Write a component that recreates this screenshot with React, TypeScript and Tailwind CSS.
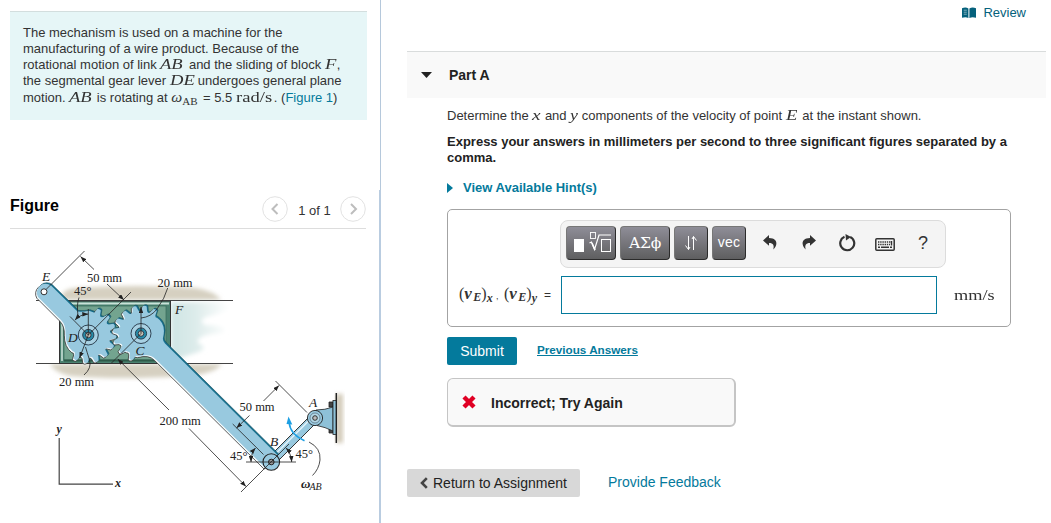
import type { ReactNode } from 'react'
import { clsx } from 'clsx'

export default function App() {
  return (
    <div className="flex h-[523px] w-[1051px] overflow-hidden bg-white font-['Liberation_Sans',Arial,sans-serif] text-[13px] leading-4 text-[#333]">
      <aside className="flex w-[379px] flex-col pt-[11px]">
        <ProblemStatement />
        <FigureHeader />
        <Mechanism />
      </aside>

      {/* Splitter between figure and question */}
      <div className="flex w-[2px] flex-col items-end">
        <div className="h-[190px] w-px bg-[#b5c8db]" />
        <div className="w-[2px] flex-1 bg-[#b9cce0]" />
      </div>

      <main className="flex flex-1 flex-col pl-[26px] pr-[5px]">
        <div className="flex h-[51px] items-start justify-end gap-[7px] pr-5 pt-[5px] text-[#047a9c]">
          <BookIcon />
          <a className="text-[#05617c]">Review</a>
        </div>
        <header className="flex h-[47px] items-center border-t border-[#d9dcdc] bg-[#f9f9f9] pl-[14px] text-[14px] font-bold text-[#222]">
          <svg width="11" height="6" className="mr-[17px]">
            <path d="M0 0H11L5.5 6Z" fill="#222" />
          </svg>
          <h2>Part A</h2>
        </header>
        <PartBody />
        <footer className="mt-[42px] flex h-7 items-center text-[14px]">
          <button className="flex h-7 w-[173px] items-center gap-[5px] rounded-[2px] bg-[#d8d8d8] pl-[13px] text-[#222]">
            <svg width="8" height="12" fill="none" className="-mt-px">
              <path d="M6.8 1.2L2 6L6.8 10.8" stroke="#444" strokeWidth="2.6" />
            </svg>
            <span className="whitespace-nowrap">Return to Assignment</span>
          </button>
          <a className="ml-7 pb-[2px] text-[#047a9c]">Provide Feedback</a>
        </footer>
      </main>
    </div>
  )
}

function M({ children, className }: { children: ReactNode; className?: string }) {
  return (
    <span
      className={clsx(
        "inline-block origin-left whitespace-nowrap font-['Liberation_Serif','Times_New_Roman',serif] text-[15.5px] leading-[14px] text-[#333]",
        className,
      )}
    >
      {children}
    </span>
  )
}

function ProblemStatement() {
  return (
    <section className="ml-[10px] h-[109px] w-[357px] whitespace-nowrap border-t border-[#d3dede] bg-[#e6f6f7] pl-[13px] pt-[13px]">
      <p className="h-4">The mechanism is used on a machine for the</p>
      <p className="h-4">manufacturing of a wire product. Because of the</p>
      <p className="h-4">
        rotational motion of link <M className="w-[25px] scale-x-[1.2] italic">AB</M> and the sliding of block{' '}
        <M className="w-[12px] scale-x-[1.2] italic">F</M>,
      </p>
      <p className="h-[17px]">
        the segmental gear lever <M className="w-[28px] scale-x-[1.2] italic">DE</M>undergoes general plane
      </p>
      <p className="h-4">
        motion. <M className="w-[24px] scale-x-[1.2] italic">AB</M> is rotating at{' '}
        <M className="w-[11px] italic">ω</M>
        <M className="w-[17px] translate-y-[3px]">
          <span className="text-[11px]">AB</span>
        </M>{' '}
        = 5.5 <M className="w-[38px] scale-x-[1.2]">rad/s</M>. (<a className="text-[#047a9c]">Figure 1</a>)
      </p>
    </section>
  )
}

function FigureHeader() {
  return (
    <div className="ml-[10px] mt-[70px] flex h-[39px] w-[356px] items-start justify-between border-b border-[#ddd]">
      <h2 className="pt-[8px] text-[16px] font-bold text-black">Figure</h2>
      <div className="flex items-start">
        <PageButton d="M15.5 8L10.5 13L15.5 18" />
        <span className="w-[52px] pl-px pt-[13px] text-center">1 of 1</span>
        <PageButton d="M11 8L16 13L11 18" />
      </div>
    </div>
  )
}

function PageButton({ d }: { d: string }) {
  return (
    <button className="mt-[6px] h-[26px] w-[26px]">
      <svg width="26" height="26" fill="none">
        <circle cx="13" cy="13" r="12.3" stroke="#e2e2e2" />
        <path d={d} stroke="#bdbdbd" strokeWidth="2" />
      </svg>
    </button>
  )
}

function BookIcon() {
  return (
    <svg width="14" height="12" viewBox="0 0 14 12" className="mt-[2px]" fill="#05617c">
      <path d="M0 1.2C2.3.3 4.6.3 6.4 1.4V11C4.6 10 2.3 10 0 10.8ZM7.4 1.4C9.4.3 11.6.3 14 1.2V10.8C11.6 10 9.4 10 7.4 11Z" />
      <path d="M1.7 3.2H4.8M1.7 5.2H4.8M1.7 7.2H4.8" stroke="#fff" strokeWidth=".5" />
    </svg>
  )
}

function PartBody() {
  return (
    <div className="pl-10 text-[#333]">
      <p className="mt-[10px] h-[26px] whitespace-nowrap">
        Determine the <M className="w-[9px] scale-x-[1.25] italic">x</M> and{' '}
        <M className="w-[8px] scale-x-[1.15] italic">y</M> components of the velocity of point{' '}
        <M className="w-[13px] scale-x-[1.2] italic">E</M> at the instant shown.
      </p>
      <p className="h-[32px] whitespace-nowrap font-bold text-[#222]">
        Express your answers in millimeters per second to three significant figures separated by a
        <br />
        comma.
      </p>
      <a className="mt-[14px] flex h-4 items-center font-bold text-[#047a9c]">
        <svg width="6" height="10" className="mr-[10px]">
          <path d="M0 0L6 5L0 10Z" fill="#047a9c" />
        </svg>
        View Available Hint(s)
      </a>

      <AnswerBox />

      <div className="mt-[10px] flex h-[28px] items-center">
        <button className="h-[28px] w-[70px] rounded-[2px] bg-[#047a9c] text-[14px] text-white">Submit</button>
        <a className="ml-5 pb-[2px] text-[11.7px] font-bold text-[#047a9c] underline">Previous Answers</a>
      </div>

      <div className="mt-[13px] flex h-[49px] w-[289px] items-center rounded-[6px] border border-b-2 border-r-2 border-[#c5c5c5] bg-[#f9f9f9] pl-[14px] text-[14px] font-bold text-[#222]">
        <svg width="14" height="14" fill="none">
          <path d="M2 2L12 12M12 2L2 12" stroke="#e00024" strokeWidth="4.4" />
        </svg>
        <span className="ml-[15px] pt-px">Incorrect; Try Again</span>
      </div>
    </div>
  )
}

const toolButton =
  'flex h-[34px] items-center justify-center rounded-[4px] border border-b-[#2b2b2b] border-l-[#777] border-r-[#2b2b2b] border-t-[#777] bg-linear-to-b from-[#8f8e98] to-[#5f5f60] text-white'

function AnswerBox() {
  return (
    <div className="mt-[13px] flex h-[118px] w-[564px] flex-col rounded-[5px] border border-[#a3a3a3] bg-white pt-[10px]">
      <div className="ml-[112px] flex h-[48px] w-[386px] items-center gap-1 rounded-[8px] border border-[#dcdcdc] bg-[#f4f4f4] pb-[2px] pl-[5px]">
        <button className={clsx(toolButton, 'w-[50px]')}>
          <svg width="40" height="24" fill="none" stroke="#fff">
            <rect x="3" y="8" width="10" height="13" fill="#fff" stroke="none" />
            <path d="M18.5 12L20.5 11L23.5 18.5L28 4H40" strokeWidth="1.2" />
            <path d="M21 12L24 19" strokeWidth="1.6" />
            <rect x="19.5" y="1.5" width="5" height="6" strokeWidth=".9" />
            <rect x="30.5" y="8.5" width="9" height="12" />
          </svg>
        </button>
        <button className={clsx(toolButton, "w-[50px] font-['DejaVu_Serif',serif] text-[15.5px] tracking-[-0.2px]")}>
          ΑΣϕ
        </button>
        <button className={clsx(toolButton, 'w-[34px]')}>
          <svg width="14" height="16" fill="none" stroke="#fff">
            <path d="M4.5 1V14M1.5 10.5L4.5 14.5V10M4.5 14.5L6 12M9.5 15V2M12.5 5.5L9.5 1.5V6M9.5 1.5L8 4" />
          </svg>
        </button>
        <button className={clsx(toolButton, 'w-[34px] pb-[2px] text-[14px] tracking-[0.2px]')}>vec</button>
        <div className="ml-[12px] flex items-center text-[#333]">
          <UndoArrow className="-mt-[2px] ml-px" />
          <UndoArrow className="-mt-[2px] ml-[25px] -scale-x-100" />
          <svg width="18" height="18" viewBox="0 0 18 18" fill="none" className="-mt-px ml-[22px]">
            <path d="M6.5 2.8A7 7 0 1 0 12.2 2.9" stroke="#333" strokeWidth="2.2" />
            <path d="M7.5 0L13 3L8 6.5Z" fill="#333" />
          </svg>
          <svg width="20" height="13" fill="none" stroke="#333" className="ml-[19px] mt-[3px]">
            <rect x=".8" y=".8" width="18.4" height="11.4" rx="1" strokeWidth="1.5" />
            <path d="M3 4H17M3 6.5H15" strokeWidth="1.3" strokeDasharray="1.4 .8" />
            <path d="M16.5 3V7.5M3 9.3H5M6 9.3H14M15 9.3H17" strokeWidth="1.4" />
          </svg>
          <span className="-mt-px ml-[23px] text-[18px] text-[#333]">?</span>
        </div>
      </div>

      <div className="mt-[8px] flex items-center">
        <label className="flex w-[113px] items-baseline whitespace-nowrap pl-[11px] text-[#333]">
          <VelocityTerm axis="x" />
          <span className="w-[8px] text-[9px]">,</span>
          <VelocityTerm axis="y" />
          <span className="ml-[3px] text-[12px]">=</span>
        </label>
        <input className="h-[38px] w-[376px] border border-[#047a9c] outline-none" />
        <M className="ml-[17px] scale-x-[1.18]">mm/s</M>
      </div>
    </div>
  )
}

function VelocityTerm({ axis }: { axis: string }) {
  return (
    <span className="inline-flex w-[37px] items-baseline font-['Liberation_Serif',serif] text-[16px]">
      <span>(</span>
      <i className="w-[9px] text-[17px] font-bold">v</i>
      <i className="relative top-[2px] w-[8px] text-[12px] font-bold">E</i>
      <span>)</span>
      <i className="relative top-[3px] text-[12px] font-bold">{axis}</i>
    </span>
  )
}

function UndoArrow({ className }: { className?: string }) {
  return (
    <svg width="14" height="15" viewBox="0 0 14 15" className={className} fill="#333">
      <path d="M6 0V3C11.5 3 14 6 13.3 9.3C13 11.5 12 13 10.3 14.5C11.3 10.5 10.5 8 6 8V10.8L0 5.4Z" />
    </svg>
  )
}

/* ---------- mechanism drawing ---------- */

const D = { x: 88.3, y: 335 }
const C = { x: 141, y: 333.5 }

// teeth along an arc, tip angles in degrees, clockwise on screen
function teeth(c: { x: number; y: number }, tips: number[]) {
  const at = (a: number, r: number) => {
    const t = (a * Math.PI) / 180
    return `${(c.x + r * Math.cos(t)).toFixed(1)} ${(c.y + r * Math.sin(t)).toFixed(1)}`
  }
  return tips
    .map((a) => {
      const p = (off: number, r: number) => at(a + off, r)
      return `L${p(-7.5, 23)}L${p(-4, 27.5)}Q${p(0, 28.8)} ${p(4, 27.5)}L${p(7.5, 23)}Q${p(11.5, 21)} ${p(14.5, 22.5)}`
    })
    .join('')
}

const gearD =
  'M51 285.6L77.5 311.5Q83 312 89 310.8' +
  teeth(D, [-67, -43, -20, 3, 26, 49, 72, 95, 118]) +
  'Q65.5 346 65.5 334Q66 325 61 320L38 297A8.8 8.8 0 0 1 51 285.6Z'

const gearC =
  'M265.4 468L156 359.5Q150 353 139 356.5' +
  teeth(C, [111, 138, 162, 186, 209, 232, 256, 278, 301]) +
  'Q166.5 324 163 338Q162.5 341 165 343.5L277.5 455Z'

const label = "font-['Liberation_Serif'] text-[12.5px]"
const italic = "font-['Liberation_Serif'] text-[13.5px] italic"

function Plate({ d }: { d: string }) {
  return (
    <g>
      <path d={d} transform="translate(1.2 -1)" fill="#16718e" stroke="#174c5c" strokeWidth=".6" />
      <path d={d} transform="translate(-1.2 1.2)" fill="#f4fbfd" stroke="#333" strokeWidth=".8" />
      <path d={d} fill="#98c9df" />
    </g>
  )
}

function Hub({ x, y }: { x: number; y: number }) {
  return (
    <g stroke="#234" strokeWidth=".9">
      <circle cx={x} cy={y} r="10" fill="#a8d1e3" />
      <circle cx={x} cy={y} r="5.6" fill="#278ba8" />
      <circle cx={x} cy={y} r="2.8" fill="#c8c0b4" />
    </g>
  )
}

function Mechanism() {
  return (
    <svg width="379" height="294" viewBox="0 229 379 294" fill="none" className="text-[#222]">
      <defs>
        <marker id="tip" viewBox="0 0 8 6" refX="8" refY="3" markerWidth="6" markerHeight="4.5" orient="auto-start-reverse" markerUnits="userSpaceOnUse">
          <path d="M0 0L8 3L0 6Z" fill="#222" />
        </marker>
        <linearGradient id="slot">
          <stop offset="0" stopColor="#cfe5e4" />
          <stop offset=".4" stopColor="#dcebea" />
          <stop offset="1" stopColor="#fff" />
        </linearGradient>
        <filter id="soft" x="-20%" y="-40%" width="140%" height="180%">
          <feGaussianBlur stdDeviation="2" />
        </filter>
      </defs>

      {/* Guide walls and slot */}
      <path d="M62 300Q60 289 76 288Q140 284 196 288Q214 291 221 300Z" fill="#d6d0c1" filter="url(#soft)" />
      <path d="M50 364H222Q214 374 186 376Q120 380 70 376Q54 372 50 364Z" fill="#d6d0c1" filter="url(#soft)" />
      <path d="M36 301H234V363H36Z" fill="#fff" />
      <path d="M171 302H222Q240 308 214 315Q195 319 205 325Q232 326 222 333Q195 335 198 343Q212 349 192 354L171 361Z" fill="url(#slot)" filter="url(#soft)" />
      <path d="M36 300.5H233M36 363.5H233" stroke="#444" strokeWidth="1" />

      {/* Block F */}
      <rect x="59.5" y="301" width="111" height="62.5" fill="#4b8271" stroke="#333" />
      <path d="M61 303.5H169" stroke="#c9e2d8" strokeWidth="2" />
      <path d="M62 304V361" stroke="#c9e2d8" strokeWidth="1.6" />
      <rect x="64" y="306" width="102" height="54" fill="#73a48f" stroke="#386b5a" strokeWidth=".7" />
      <path d="M64 360.5H167" stroke="#2d5a49" strokeWidth="2" />

      {/* Bearing wall at A */}
      <rect x="336" y="394" width="7" height="49" fill="#d3cbb9" filter="url(#soft)" />
      <path d="M336.3 393V443" stroke="#222" strokeWidth="1.5" />
      <path d="M329 402H333V407H329ZM329 428H333V433H329Z" fill="#444" stroke="#222" strokeWidth=".8" />
      <path d="M316 410Q325 410 333 407V431Q325 427 317 425.5Z" fill="#8ec1d8" stroke="#222" strokeWidth=".8" />
      <rect x="333" y="400.5" width="3" height="34" fill="#8ec1d8" stroke="#222" strokeWidth=".8" />

      {/* Link AB */}
      <path d="M269 457L311 415L317.5 421.5L276 463Z" fill="#98c9df" stroke="#222" strokeWidth=".9" />
      <path d="M271 458.5L312 417.5" stroke="#e4f4fa" strokeWidth="1.6" />
      <circle cx="315" cy="418" r="7.6" fill="#98c9df" stroke="#222" strokeWidth=".9" />
      <circle cx="315" cy="418" r="5" fill="#b3d8e7" stroke="#456" strokeWidth=".6" />
      <circle cx="315" cy="418" r="2.3" fill="#bbb" stroke="#222" strokeWidth=".9" />

      <Plate d={gearD} />
      <Plate d={gearC} />
      <Hub {...D} />
      <Hub {...C} />
      <circle cx="44" cy="291.8" r="3" fill="#fff" stroke="#333" />
      <circle cx="271.3" cy="462" r="8.3" fill="#98c9df" stroke="#222" strokeWidth="1.1" />
      <circle cx="271.3" cy="462" r="2.8" fill="#999" stroke="#222" strokeWidth="1" />

      {/* Dimension and extension lines */}
      <g stroke="#222" strokeWidth=".8">
        <path d="M46 289.5L84.5 251M88.3 335L131 292M88.3 335L70 316.5M88.3 335V309M141 333.5L111.5 363" />
        <path d="M94 269.5L80.5 256.5" markerEnd="url(#tip)" />
        <path d="M107 284L124 300" markerEnd="url(#tip)" />
        <path d="M75 320Q80 314.5 88.3 314" markerStart="url(#tip)" markerEnd="url(#tip)" />
        <path d="M79 297.5Q76.5 304 78 316" />
        <path d="M88.3 335L79.5 358" markerEnd="url(#tip)" />
        <path d="M84 375Q92 368 89.5 360Q87 352 85.5 347" />
        <path d="M141 333.5V307" markerEnd="url(#tip)" />
        <path d="M167.7 288Q165 298 157 309Q151 317 141 318" />
        <path d="M169 410L117.7 359" markerEnd="url(#tip)" />
        <path d="M189 428.5L246 486.5" markerEnd="url(#tip)" />
        <path d="M271 462L241 492" />
        <path d="M275.5 381L307 412.5M232.7 424L263.5 454.5M246 462H296M271 462L289 444" />
        <path d="M263.5 401L279 385.5" markerEnd="url(#tip)" />
        <path d="M249.5 415.5L236.5 428" markerEnd="url(#tip)" />
        <path d="M255.5 448Q251 453 251 462" markerStart="url(#tip)" markerEnd="url(#tip)" />
        <path d="M286 448Q291 453 291.7 462" markerStart="url(#tip)" markerEnd="url(#tip)" />
        <path d="M309 442Q321 448 320 460Q319 469 312.5 475.5" />
      </g>

      {/* Rotation arrow */}
      <path d="M304.5 440.7Q290 434 289.3 423" stroke="#1c9fe3" strokeWidth="1.6" />
      <path d="M288.5 416.5L292.3 424.5L286.5 424Z" fill="#1c9fe3" />

      {/* Axes */}
      <path d="M59.2 438V484.2H113" stroke="#444" strokeWidth="1.2" />

      <g fill="#222">
        <text x="42" y="281" className={italic}>E</text>
        <text x="74" y="295" className={label}>45°</text>
        <text x="87" y="282" className={label}>50 mm</text>
        <text x="157.5" y="287" className={label}>20 mm</text>
        <text x="175" y="313.5" className={italic}>F</text>
        <text x="68" y="342" className={italic}>D</text>
        <text x="135.5" y="354.5" className={italic}>C</text>
        <text x="59" y="386" className={label}>20 mm</text>
        <text x="159.5" y="425" className={label}>200 mm</text>
        <text x="239.5" y="411" className={label}>50 mm</text>
        <text x="309" y="407" className={italic}>A</text>
        <text x="270" y="446" className={italic}>B</text>
        <text x="230" y="459.5" className={label}>45°</text>
        <text x="295.5" y="458" className={label}>45°</text>
        <text x="56.5" y="433" className="font-['Liberation_Serif'] text-[12px] font-bold italic">y</text>
        <text x="115" y="487" className="font-['Liberation_Serif'] text-[12px] font-bold italic">x</text>
        <text x="301" y="488" className="font-['Liberation_Serif'] text-[13px] font-bold italic">ω</text>
        <text x="309.5" y="490" className="font-['Liberation_Serif'] text-[10px] italic">AB</text>
      </g>
    </svg>
  )
}
